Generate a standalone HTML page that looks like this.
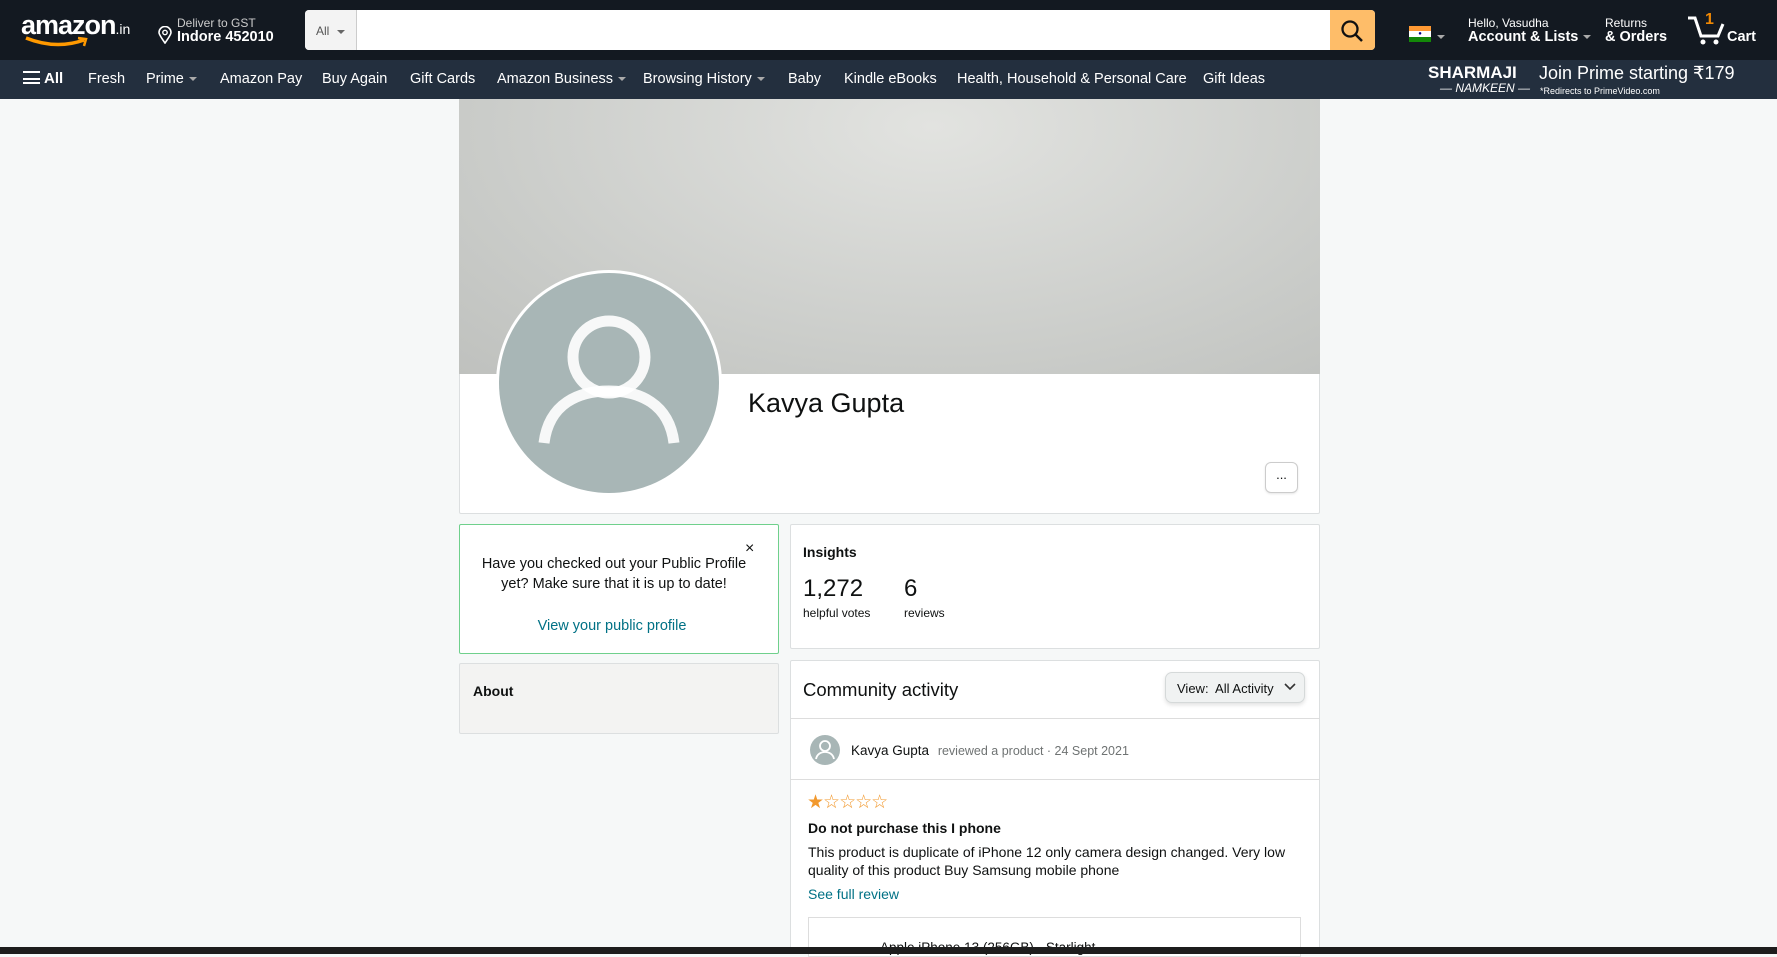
<!DOCTYPE html>
<html><head><meta charset="utf-8"><style>
*{box-sizing:border-box;margin:0;padding:0}
body{width:1777px;height:954px;overflow:hidden;background:#f6f8f8;font-family:"Liberation Sans",sans-serif;color:#0f1111;position:relative}
.abs{position:absolute}
.top{left:0;top:0;width:1777px;height:60px;background:#131921;color:#fff}
.nav{left:0;top:60px;width:1777px;height:39px;background:#232f3e;color:#fff;font-size:14.5px}
.nav span{position:absolute;top:11px;white-space:nowrap}
.caret{display:inline-block;width:0;height:0;border-left:4px solid transparent;border-right:4px solid transparent;border-top:4px solid #aaa;vertical-align:middle;margin-left:5px}
.card{background:#fff;border:1px solid #dcdfe0;border-radius:2px}
.link{color:#007185}
</style></head><body>
<div class="abs top">
  <div class="abs" style="left:21px;top:10px;font-size:27px;font-weight:bold;letter-spacing:-1px">amazon<span style="font-size:14px;font-weight:normal;letter-spacing:0">.in</span></div>
  <svg class="abs" style="left:24px;top:36px" width="68" height="12"><path d="M2 2 Q32 14 60 4" stroke="#f90" stroke-width="3.5" fill="none"/><path d="M54 2 L62 3 L60 10" stroke="#f90" stroke-width="2.5" fill="none"/></svg>
  <svg class="abs" style="left:158px;top:26px" width="14" height="18"><path d="M7 17 C2 10 1 8 1 6.5 A6 6 0 0 1 13 6.5 C13 8 12 10 7 17Z" stroke="#fff" stroke-width="1.6" fill="none"/><circle cx="7" cy="6.5" r="2.2" stroke="#fff" stroke-width="1.4" fill="none"/></svg>
  <div class="abs" style="left:177px;top:16px;font-size:12px;color:#ccc">Deliver to GST</div>
  <div class="abs" style="left:177px;top:29px;font-size:14.5px;font-weight:bold">Indore 452010</div>
  <div class="abs" style="left:305px;top:10px;width:1070px;height:40px;background:#fff;border-radius:4px"></div>
  <div class="abs" style="left:305px;top:10px;width:52px;height:40px;background:#f3f3f3;border-radius:4px 0 0 4px;border-right:1px solid #ccc;color:#555;font-size:12px;padding:14px 0 0 11px">All<span class="caret" style="border-top-color:#666;margin-left:8px"></span></div>
  <div class="abs" style="left:1330px;top:10px;width:45px;height:40px;background:#febd69;border-radius:0 4px 4px 0"></div>
  <svg class="abs" style="left:1340px;top:19px" width="24" height="24"><circle cx="10" cy="10" r="7.5" stroke="#111" stroke-width="2.3" fill="none"/><path d="M15.5 15.5 L22 22" stroke="#111" stroke-width="2.5"/></svg>
  <div class="abs" style="left:1409px;top:26px;width:22px;height:16px"><div style="height:5px;background:#f93"></div><div style="height:6px;background:#fff;text-align:center;line-height:6px;font-size:6px;color:#008">●</div><div style="height:5px;background:#138808"></div></div>
  <span class="abs caret" style="left:1432px;top:35px"></span>
  <div class="abs" style="left:1468px;top:16px;font-size:12px">Hello, Vasudha</div>
  <div class="abs" style="left:1468px;top:29px;font-size:14.5px;font-weight:bold">Account &amp; Lists<span class="caret"></span></div>
  <div class="abs" style="left:1605px;top:16px;font-size:12px">Returns</div>
  <div class="abs" style="left:1605px;top:29px;font-size:14.5px;font-weight:bold">&amp; Orders</div>
  <svg class="abs" style="left:1686px;top:14px" width="42" height="32"><path d="M2 4 H9 L15 22 H32 L37 10" stroke="#fff" stroke-width="3" fill="none"/><circle cx="17" cy="28" r="2.5" fill="#fff"/><circle cx="30" cy="28" r="2.5" fill="#fff"/></svg>
  <div class="abs" style="left:1705px;top:11px;font-size:16px;font-weight:bold;color:#f08804">1</div>
  <div class="abs" style="left:1727px;top:29px;font-size:14.5px;font-weight:bold">Cart</div>
</div>
<div class="abs nav">
  <span style="left:23px;top:10px;font-weight:bold;font-size:15px"><span style="position:static;display:inline-block;width:17px;height:13px;border-top:2px solid #fff;border-bottom:2px solid #fff;vertical-align:-1px;margin-right:4px;background:linear-gradient(#fff,#fff) 0 4.5px/100% 2px no-repeat"></span>All</span>
  <span style="left:88px">Fresh</span>
  <span style="left:146px">Prime<i class="caret"></i></span>
  <span style="left:220px">Amazon Pay</span>
  <span style="left:322px">Buy Again</span>
  <span style="left:410px">Gift Cards</span>
  <span style="left:497px">Amazon Business<i class="caret"></i></span>
  <span style="left:643px">Browsing History<i class="caret"></i></span>
  <span style="left:788px">Baby</span>
  <span style="left:844px">Kindle eBooks</span>
  <span style="left:957px">Health, Household &amp; Personal Care</span>
  <span style="left:1203px">Gift Ideas</span>
  <span style="left:1428px;top:3px;font-weight:bold;font-size:17px">SHARMAJI</span>
  <span style="left:1440px;top:21px;font-size:12px;font-style:italic">— NAMKEEN —</span>
  <span style="left:1539px;top:3px;font-size:18px">Join Prime starting ₹179</span>
  <span style="left:1540px;top:26px;font-size:9px">*Redirects to PrimeVideo.com</span>
</div>
<div class="abs card" style="left:459px;top:99px;width:861px;height:415px"></div>
<div class="abs" style="left:459px;top:99px;width:861px;height:275px;background:radial-gradient(ellipse at 55% 10%,#e2e3e0,#c9cbc8 70%,#bfc1be)"></div>
<div class="abs" style="left:496px;top:270px;width:226px;height:226px;border-radius:50%;background:#fff"></div>
<div class="abs" style="left:499px;top:273px;width:220px;height:220px;border-radius:50%;background:#a8b6b6;overflow:hidden">
  <svg width="220" height="220"><circle cx="110" cy="84" r="36" stroke="#fff" stroke-width="11" fill="none" opacity=".9"/><path d="M45 170 C50 130 80 118 110 118 C140 118 170 130 175 170" stroke="#fff" stroke-width="11" fill="none" opacity=".9"/></svg>
</div>
<div class="abs" style="left:748px;top:388px;font-size:27px">Kavya Gupta</div>
<div class="abs" style="left:1265px;top:462px;width:33px;height:31px;border:1px solid #ccc;border-radius:6px;background:#fff;text-align:center;font-size:13px;line-height:24px;box-shadow:0 1px 2px rgba(0,0,0,.1)">...</div>
<div class="abs" style="left:459px;top:524px;width:320px;height:130px;background:#fff;border:1px solid #6fd08c;border-radius:2px"></div>
<div class="abs" style="left:745px;top:540px;font-size:16px">×</div>
<div class="abs" style="left:479px;top:554px;width:270px;text-align:center;font-size:14.5px;line-height:20px">Have you checked out your Public Profile yet? Make sure that it is up to date!</div>
<div class="abs link" style="left:459px;top:618px;width:306px;text-align:center;font-size:14.5px">View your public profile</div>
<div class="abs" style="left:459px;top:663px;width:320px;height:71px;background:#f3f3f2;border:1px solid #dcdfe0;border-radius:2px"></div>
<div class="abs" style="left:473px;top:683px;font-size:14px;font-weight:bold">About</div>
<div class="abs card" style="left:790px;top:524px;width:530px;height:125px"></div>
<div class="abs" style="left:803px;top:544px;font-size:14px;font-weight:bold">Insights</div>
<div class="abs" style="left:803px;top:575px;font-size:24px">1,272</div>
<div class="abs" style="left:803px;top:606px;font-size:12px">helpful votes</div>
<div class="abs" style="left:904px;top:575px;font-size:24px">6</div>
<div class="abs" style="left:904px;top:606px;font-size:12px">reviews</div>
<div class="abs card" style="left:790px;top:660px;width:530px;height:290px"></div>
<div class="abs" style="left:803px;top:679px;font-size:18.5px">Community activity</div>
<div class="abs" style="left:1165px;top:672px;width:140px;height:31px;background:#f0f2f2;border:1px solid #d5d9d9;border-radius:7px;box-shadow:0 2px 4px rgba(0,0,0,.12);font-size:13px;padding:8px 0 0 11px">View:&nbsp; All Activity</div>
<svg class="abs" style="left:1284px;top:683px" width="12" height="8"><path d="M1 1 L6 6 L11 1" stroke="#333" stroke-width="1.6" fill="none"/></svg>
<div class="abs" style="left:790px;top:718px;width:530px;height:1px;background:#ddd"></div>
<div class="abs" style="left:810px;top:735px;width:30px;height:30px;border-radius:50%;background:#a8b6b6;overflow:hidden"><svg width="30" height="30"><circle cx="15" cy="11" r="5" stroke="#fff" stroke-width="1.8" fill="none"/><path d="M6 24 C7 19 11 17 15 17 C19 17 23 19 24 24" stroke="#fff" stroke-width="1.8" fill="none"/></svg></div>
<div class="abs" style="left:851px;top:743px;font-size:13.5px">Kavya Gupta <span style="color:#6f7373;font-size:12.5px;margin-left:5px">reviewed a product · 24 Sept 2021</span></div>
<div class="abs" style="left:790px;top:779px;width:530px;height:1px;background:#ddd"></div>
<div class="abs" style="left:807px;top:791px;font-size:19px;color:#f2992e;letter-spacing:-1px">★☆☆☆☆</div>
<div class="abs" style="left:808px;top:820px;font-size:14px;font-weight:bold">Do not purchase this I phone</div>
<div class="abs" style="left:808px;top:843px;width:495px;font-size:14px;line-height:18px">This product is duplicate of iPhone 12 only camera design changed. Very low quality of this product Buy Samsung mobile phone</div>
<div class="abs link" style="left:808px;top:886px;font-size:14px">See full review</div>
<div class="abs" style="left:808px;top:917px;width:493px;height:40px;border:1px solid #ddd;background:#fff"></div>
<div class="abs" style="left:880px;top:940px;font-size:13.5px">Apple iPhone 13 (256GB) - Starlight</div>
<div class="abs" style="left:0;top:947px;width:1777px;height:7px;background:#1d1d1d;z-index:10"></div>
</body></html>
